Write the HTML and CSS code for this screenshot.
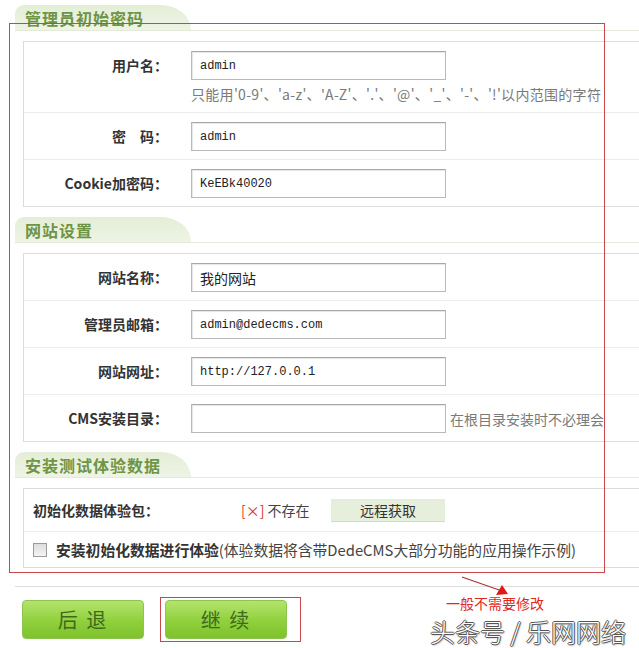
FILE: index.html
```html
<!DOCTYPE html>
<html lang="zh-CN">
<head>
  <meta charset="UTF-8">
  <title>DedeCMS 安装 - 参数配置</title>
  <link rel="stylesheet" href="styles.css">
</head>
<body>
  <div class="page">
    <!-- 管理员初始密码 -->
    <div class="sec-title first"><span>管理员初始密码</span></div>
    <div class="box">
      <div class="row tall">
        <div class="label">用户名：</div>
        <div class="field">
          <input class="txt mono" type="text" value="admin">
          <p class="hint">只能用'0-9'、'a-z'、'A-Z'、'.'、'@'、'_'、'-'、'!'以内范围的字符</p>
        </div>
      </div>
      <div class="row">
        <div class="label">密　码：</div>
        <div class="field"><input class="txt mono" type="text" value="admin"></div>
      </div>
      <div class="row">
        <div class="label">Cookie加密码：</div>
        <div class="field"><input class="txt mono" type="text" value="KeEBk40020"></div>
      </div>
    </div>

    <!-- 网站设置 -->
    <div class="sec-title"><span>网站设置</span></div>
    <div class="box">
      <div class="row">
        <div class="label">网站名称：</div>
        <div class="field"><input class="txt" type="text" value="我的网站"></div>
      </div>
      <div class="row">
        <div class="label">管理员邮箱：</div>
        <div class="field"><input class="txt mono" type="text" value="admin@dedecms.com"></div>
      </div>
      <div class="row">
        <div class="label">网站网址：</div>
        <div class="field"><input class="txt mono" type="text" value="http://127.0.0.1"></div>
      </div>
      <div class="row">
        <div class="label">CMS安装目录：</div>
        <div class="field inline">
          <input class="txt" type="text" value="">
          <span class="note">在根目录安装时不必理会</span>
        </div>
      </div>
    </div>

    <!-- 安装测试体验数据 -->
    <div class="sec-title"><span>安装测试体验数据</span></div>
    <div class="box demo">
      <div class="drow">
        <div class="dlabel">初始化数据体验包：</div>
        <div class="status"><em>[×]</em> 不存在</div>
        <button class="fetch-btn">远程获取</button>
      </div>
      <div class="drow check">
        <input class="chk" type="checkbox">
        <b>安装初始化数据进行体验</b><span>(体验数据将含带DedeCMS大部分功能的应用操作示例)</span>
      </div>
    </div>

    <div class="actions">
      <button class="big-btn">后 退</button>
      <button class="big-btn">继 续</button>
    </div>
  </div>

  <!-- 标注 -->
  <div class="mark main-mark"></div>
  <div class="mark btn-mark"></div>
  <svg class="arrow" width="60" height="30" viewBox="0 0 60 30">
    <line x1="2" y1="3" x2="42" y2="17" stroke="#b03030" stroke-width="1.2"/>
    <polygon points="36,21 48,20 42,11" fill="#e01818"/>
  </svg>
  <div class="tip">一般不需要修改</div>
  <div class="watermark">头条号 / 乐网网络</div>
</body>
</html>
```

FILE: styles.css
```css
/* Reset default styles */
* {
  margin: 0;
  padding: 0;
  box-sizing: border-box;
}

html, body {
  width: 639px;
  height: 648px;
  overflow: hidden;
}

body {
  font-family: "Noto Sans CJK SC", "Liberation Sans", sans-serif;
  font-size: 14px;
  color: #333;
  background: #fff;
  position: relative;
}

.page {
  width: 640px;
  padding: 0 0 0 15px;
}

/* section tabs */
.sec-title {
  height: 26px;
  margin-top: 10px;
  border-bottom: 1px solid #e3ebd8;
}

.sec-title.first {
  margin-top: 5px;
}

.sec-title span {
  display: block;
  width: 176px;
  height: 25px;
  padding-left: 10px;
  background: linear-gradient(#e4eed6, #eef4e6);
  border-radius: 9px 30px 0 0 / 9px 25px 0 0;
  font-size: 16px;
  font-weight: bold;
  letter-spacing: 1px;
  line-height: 27px;
  color: #6e9446;
}

/* boxes */
.box {
  margin: 10px 0 0 8px;
  border: 1px solid #dcdcdc;
  background: #fff;
}

.row {
  display: flex;
  align-items: flex-start;
  padding: 9px 0 8px;
  border-top: 1px solid #ececec;
}

.row:first-child {
  border-top: none;
}

.label {
  width: 144px;
  margin-right: 23px;
  text-align: right;
  font-weight: bold;
  font-size: 14px;
  line-height: 29px;
  color: #333;
}

.field.inline {
  display: flex;
  align-items: center;
}

.txt {
  display: block;
  width: 255px;
  height: 29px;
  border: 1px solid #b9b9b9;
  border-top-color: #a8a8a8;
  box-shadow: inset 1px 1px 1px #e6e6e6;
  padding: 0 8px;
  font-family: "Noto Sans CJK SC", sans-serif;
  font-size: 14px;
  color: #222;
  outline: none;
}

.txt.mono {
  font-family: "Liberation Mono", "DejaVu Sans Mono", monospace;
  font-size: 12px;
}

.hint {
  margin-top: 4px;
  font-size: 14px;
  line-height: 20px;
  letter-spacing: 0.3px;
  color: #7a7a7a;
  white-space: nowrap;
}

.note {
  margin-left: 4px;
  font-size: 14px;
  color: #7a7a7a;
  white-space: nowrap;
}

/* demo data box */
.demo {
  height: 80px;
}

.drow {
  display: flex;
  align-items: center;
  height: 42px;
  padding-left: 9px;
}

.drow.check {
  height: 36px;
  border-top: 1px solid #ececec;
}

.dlabel {
  width: 208px;
  font-weight: bold;
  font-size: 14px;
}

.status {
  width: 90px;
  font-size: 14px;
  color: #444;
}

.status em {
  font-style: normal;
  color: #d9342b;
}

.fetch-btn {
  width: 114px;
  height: 23px;
  border: none;
  border-bottom: 1px solid #d2dcc4;
  background: #e6efdb;
  font-family: "Noto Sans CJK SC", sans-serif;
  font-size: 14px;
  color: #333;
}

.chk {
  appearance: none;
  width: 14px;
  height: 14px;
  margin-right: 9px;
  border: 1px solid #9a9a9a;
  background: linear-gradient(#dcdcdc, #f4f4f4);
}

.drow.check b {
  font-size: 14.8px;
  color: #333;
}

.drow.check span {
  font-size: 14.8px;
  color: #444;
  white-space: nowrap;
}

/* bottom buttons */
.actions {
  display: flex;
  gap: 21px;
  margin-top: 18px;
  padding: 13px 0 0 7px;
  border-top: 1px solid #dedede;
}

.big-btn {
  width: 122px;
  height: 39px;
  border: 1px solid #8cc450;
  border-radius: 4px;
  background: linear-gradient(#b4e46c, #8fd03c 55%, #7fc22c);
  font-family: "Noto Sans CJK SC", sans-serif;
  font-size: 20px;
  letter-spacing: 2px;
  color: #3f6a1c;
}

/* annotations over the screenshot */
.mark {
  position: absolute;
  border: 1.5px solid #c9474a;
}

.main-mark {
  left: 9px;
  top: 23px;
  width: 596px;
  height: 550px;
}

.btn-mark {
  left: 160px;
  top: 597px;
  width: 141px;
  height: 45px;
}

.arrow {
  position: absolute;
  left: 460px;
  top: 574px;
}

.tip {
  position: absolute;
  left: 446px;
  top: 595px;
  font-size: 14px;
  line-height: 16px;
  color: #e0281e;
}

.watermark {
  position: absolute;
  left: 430px;
  top: 618px;
  font-size: 25px;
  font-weight: 300;
  line-height: 26px;
  color: #fff;
  text-shadow: 1px 0 0 #555, -1px 0 0 #555, 0 1px 0 #555, 0 -1px 0 #555, 1px 1px 2px #888;
  white-space: nowrap;
}
```
